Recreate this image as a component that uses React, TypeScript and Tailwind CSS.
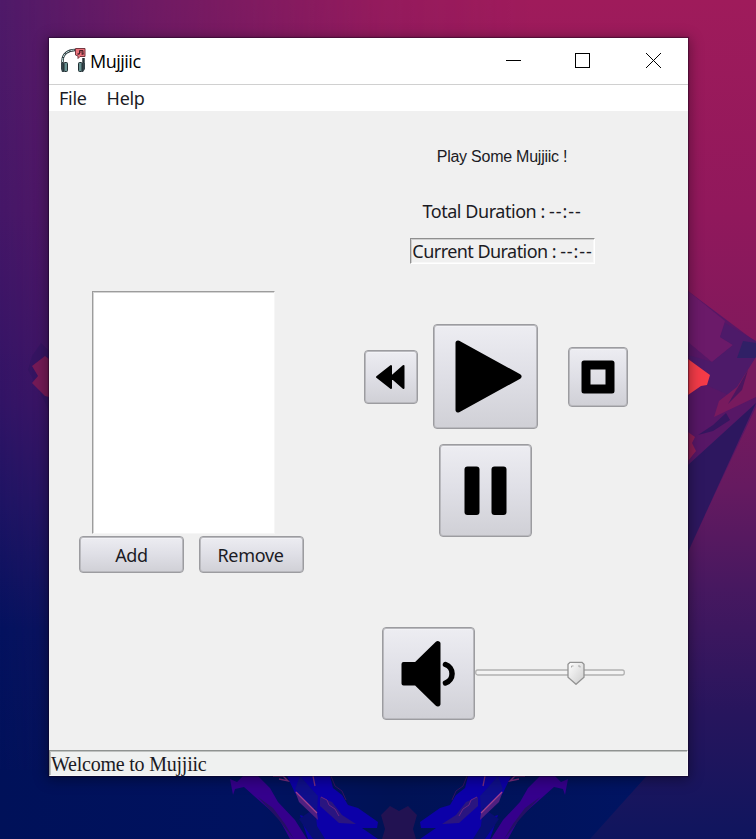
import type { ReactNode } from "react";

function Crystals() {
  return (
    <>
      <path d="M230 779l7 3 6-6h15l12 12 8 14 17 18 12 19h-17l-12-22-16-14-18-16-9 2-2 6z" fill="#35008c" />
      <path d="M258 797l15 11 12 16 9 15-16-20z" fill="#241064" />
      <path d="M287 776h43l3 12 9 7 6 10 10 3 20 14-1 6h-15l16 11h-70l-8-24 16 5-21-27z" fill="#0c00a8" />
      <path d="M300 776l18 20-1 17-22-24z" fill="#0f0f8b" />
      <path d="M315 808l2 18 8 13h-12l-14-20z" fill="#080f72" />
      <path d="M320 797l12 5 10 13 14 9-17-1-19-17z" fill="#2a1580" />
      <path d="M321 797l6 3 2 5 6 4 4 7" stroke="#6b2780" fill="none" />
      <path d="M295 791l22 22 1 7-19-18z" fill="#4f2080" />
      <path d="M296 792l21 21" stroke="#a0408c" strokeWidth="1.2" />
      <path d="M273 776h10l5 5-9-2M313 776l2 10" stroke="#7a2c80" fill="none" strokeWidth="1.3" />
      <path d="M331 776l4 10 7 5 4 9" stroke="#35125f" fill="none" />
    </>
  );
}

function Wallpaper() {
  return (
    <svg className="absolute inset-0 h-full w-full" viewBox="0 0 756 839" preserveAspectRatio="none" aria-hidden="true">
      <defs>
        <linearGradient id="cool" x1="0" y1="0" x2="0" y2="1">
          <stop offset="0" stopColor="#4f1a69" />
          <stop offset=".25" stopColor="#451768" />
          <stop offset=".48" stopColor="#321466" />
          <stop offset=".6" stopColor="#1e1464" />
          <stop offset=".75" stopColor="#04125f" />
          <stop offset="1" stopColor="#001159" />
        </linearGradient>
        <linearGradient id="warm" x1="0" y1="0" x2="0" y2="1">
          <stop offset="0" stopColor="#9f1b5b" />
          <stop offset=".25" stopColor="#91185c" />
          <stop offset=".42" stopColor="#80195c" />
          <stop offset=".58" stopColor="#661a60" />
          <stop offset=".7" stopColor="#471860" />
          <stop offset=".85" stopColor="#27155d" />
          <stop offset="1" stopColor="#0f155e" />
        </linearGradient>
        <linearGradient id="fade" x1="0" y1="0" x2="1" y2="0">
          <stop offset="0" stopColor="#000" />
          <stop offset=".2" stopColor="#666" />
          <stop offset=".5" stopColor="#ddd" />
          <stop offset=".7" stopColor="#fff" />
        </linearGradient>
        <linearGradient id="floor" x1="0" y1="0" x2="1" y2="0">
          <stop offset="0" stopColor="#001159" />
          <stop offset=".4" stopColor="#001260" />
          <stop offset=".6" stopColor="#001255" />
          <stop offset="1" stopColor="#001463" />
        </linearGradient>
        <mask id="side">
          <rect width="756" height="839" fill="url(#fade)" />
        </mask>
      </defs>
      <rect width="756" height="839" fill="url(#cool)" />
      <rect width="756" height="839" fill="url(#warm)" mask="url(#side)" />
      <path d="M0 770H652L590 839H0Z" fill="url(#floor)" />
      {/* left shard */}
      <path d="M41 343l8 8v60l-12-25-9-16 4-14z" fill="#30145f" opacity=".6" />
      <path d="M45 356l4 3v38l-4-1-13-13 6-7-6-10z" fill="#741a56" />
      {/* right shards */}
      <path d="M688 291l68 51v65L688 551Z" fill="#571766" />
      <path d="M688 291l37 30-5 16 13 8-21 17-24-20z" fill="#6b1a69" />
      <path d="M725 323l31 18v16l-23 40-27-12-18-30 24 7 21-17-13-8z" fill="#4d1a69" />
      <path d="M743 341l13 2v15l-19 0z" fill="#302066" />
      <path d="M756 357v40l-42 20 5-16 18-14z" fill="#781a5e" />
      <path d="M748 370l-6 20-14 14z" fill="#4c165f" />
      <path d="M688 359l22 16-3 10-6 1-13 9z" fill="#f43b48" />
      <path d="M688 432l7 5-3 6 4 8-8 10z" fill="#8b1e55" />
      <path d="M756 403L688 465v87z" fill="#2d175f" />
      <path d="M695 437l18-12 13-12 4 7-17 11-15 4z" fill="#35165f" />
      {/* mirrored crystals below the window */}
      <Crystals />
      <g transform="translate(798 0) scale(-1 1)">
        <Crystals />
      </g>
      <path d="M381 815l9-9 9 5 9-5 9 9-4 14 3 10h-34l3-10z" fill="#221252" />
    </svg>
  );
}

function HeadphonesLogo() {
  return (
    <svg className="h-[26px] w-[26px] shrink-0" viewBox="0 0 26 26" aria-hidden="true">
      <path d="M2.500 15V13C2.500 6 8 2 15 2M23.500 10v6" fill="none" stroke="#263337" strokeWidth="2.500" />
      <path d="M2.500 14V13C2.500 6 8 2 15 2" fill="none" stroke="#c9e6e4" strokeWidth="1" strokeDasharray="4 1" />
      <path d="M1 15h3v9H2l-1-3zM22 15h3v6l-2 3h-1z" fill="#344349" />
      <rect x="4" y="14.500" width="3.500" height="9" rx="1" fill="#699292" stroke="#1f2d31" />
      <rect x="18.500" y="14.500" width="3.500" height="9" rx="1" fill="#699292" stroke="#1f2d31" />
      <path d="M15.500.5H25v8h-5l-2 2V8l-2.500-1z" fill="#ed727b" stroke="#743740" />
      <path d="M19.500 6V2.500h3.500V6M19.500 4H23" fill="none" stroke="#49222b" />
      <path d="M17.500 6h2M21.500 6h2" stroke="#49222b" strokeWidth="1.500" />
    </svg>
  );
}

function TitleBar() {
  return (
    <header className="flex h-[47px] items-center border-b border-[#d0d0d0] bg-white pl-[11px]">
      <HeadphonesLogo />
      <h1 className="ml-1 flex-1 font-['Open_Sans',sans-serif] text-[18px] leading-6 tracking-[-0.5px] text-black">Mujjiic</h1>
      <div className="flex items-center gap-[54px] pr-[26px]">
        <button aria-label="Minimize" className="block">
          <svg className="h-4 w-4" viewBox="0 0 16 16"><path d="M0 7.500h15" stroke="#000" /></svg>
        </button>
        <button aria-label="Maximize" className="-ml-px block">
          <svg className="h-4 w-4" viewBox="0 0 16 16"><rect x=".5" y=".5" width="14" height="14" fill="none" stroke="#000" /></svg>
        </button>
        <button aria-label="Close" className="ml-px block">
          <svg className="h-4 w-4" viewBox="0 0 16 16"><path d="M0 0l15 15M15 0L0 15" stroke="#000" /></svg>
        </button>
      </div>
    </header>
  );
}

function ThemedButton({ label, size, children }: { label?: string; size: string; children: ReactNode }) {
  return (
    <button
      aria-label={label}
      className={
        "flex shrink-0 items-center justify-center rounded-[4px] border border-[#9c9ca0] bg-linear-to-b from-[#ededf2] via-[#dfdfe6] to-[#d0d0d6] shadow-[inset_0_0_0_1px_#b9b9be,inset_0_2px_0_#f2f2f6] " + size
      }
    >
      {children}
    </button>
  );
}

function Playlist() {
  return (
    <section className="flex w-[225px] flex-col pt-[180px]">
      <div className="ml-[13px] h-[243px] w-[183px] border border-t-[#9c9c9c] border-r-[#f6f6f6] border-b-[#f6f6f6] border-l-[#9c9c9c] bg-white shadow-[inset_1px_1px_0_#d4d4d4]" />
      <div className="mt-[2px] flex gap-[15px] text-[18px] tracking-[-0.3px]">
        <ThemedButton size="h-[37px] w-[105px] pt-px">Add</ThemedButton>
        <ThemedButton size="h-[37px] w-[105px] pt-px pr-[2px]">Remove</ThemedButton>
      </div>
    </section>
  );
}

function Duration({ name }: { name: string }) {
  return (
    <>
      {name} Duration :&nbsp;<span className="tracking-[0.9px]">--:--</span>
    </>
  );
}

function Player() {
  return (
    <section className="flex w-[276px] flex-col">
      <div className="flex flex-col items-center">
        <p className="mt-[36px] h-5 font-['Liberation_Sans',Arial,sans-serif] text-[16px] leading-5 tracking-[-0.24px]">Play Some Mujjiic !</p>
        <p className="mt-[32px] h-6 text-[18px] leading-6 tracking-[-0.45px]">
          <Duration name="Total" />
        </p>
        <p className="mt-[15px] flex h-[26px] w-[185px] items-center justify-center border border-t-[#8f8f8f] border-r-white border-b-white border-l-[#8f8f8f] pt-px pl-px text-[18px] whitespace-nowrap tracking-[-0.55px] shadow-[inset_1px_1px_0_#cfcfcf,inset_-1px_-1px_0_#f8f8f8]">
          <Duration name="Current" />
        </p>
      </div>
      <div className="mt-[60px] flex items-center">
        <ThemedButton label="Rewind" size="h-[54px] w-[54px]">
          <svg className="h-[54px] w-[54px] shrink-0" viewBox="0 0 54 54">
            <path d="M13 27L27 16V38ZM27 27L39.500 16V38Z" stroke="#000" strokeWidth="2" strokeLinejoin="round" />
          </svg>
        </ThemedButton>
        <div className="ml-[15px]">
          <ThemedButton label="Play" size="h-[105px] w-[105px]">
            <svg className="h-[105px] w-[105px] shrink-0" viewBox="0 0 105 105">
              <path d="M25 19L86 52.500L25 86Z" stroke="#000" strokeWidth="5" strokeLinejoin="round" />
            </svg>
          </ThemedButton>
        </div>
        <div className="ml-[30px]">
          <ThemedButton label="Stop" size="h-[60px] w-[60px]">
            <svg className="h-[60px] w-[60px] shrink-0" viewBox="0 0 60 60">
              <path fillRule="evenodd" d="M16 13.500h28q2.500 0 2.500 2.500v28q0 2.500-2.500 2.500H16q-2.500 0-2.500-2.500V16q0-2.500 2.500-2.500zM22.500 22.500v15h15v-15z" />
            </svg>
          </ThemedButton>
        </div>
      </div>
      <div className="mt-[15px] ml-[75px]">
        <ThemedButton label="Pause" size="h-[93px] w-[93px]">
          <svg className="h-[93px] w-[93px] shrink-0" viewBox="0 0 93 93">
            <rect x="25.500" y="22.500" width="15" height="48.500" rx="3" />
            <rect x="52.500" y="22.500" width="15" height="48.500" rx="3" />
          </svg>
        </ThemedButton>
      </div>
      <div className="mt-[90px] ml-[18px] flex items-center">
        <ThemedButton label="Mute" size="h-[93px] w-[93px]">
          <svg className="h-[93px] w-[93px] shrink-0" viewBox="0 0 93 93">
            <path d="M21.500 37h12.500L55 16.500q1-1 1.500 0V77q-.5 1-1.500 0L34 56.500H21.500z" stroke="#000" strokeWidth="4" strokeLinejoin="round" />
            <path d="M63.500 37.500a9.800 9.800 0 0 1 0 18.500" fill="none" stroke="#000" strokeWidth="5.500" strokeLinecap="round" />
          </svg>
        </ThemedButton>
        <svg className="mb-[2px] h-6 w-[150px] shrink-0" viewBox="0 0 150 24" role="slider" aria-label="Volume" aria-valuenow={70}>
          <defs>
            <linearGradient id="thumb" x1="0" y1="0" x2="1" y2="1">
              <stop stopColor="#fff" />
              <stop offset="1" stopColor="#ccc" />
            </linearGradient>
          </defs>
          <rect x=".75" y="9" width="148.500" height="5" rx="2" fill="#f3f3f3" stroke="#b1b1b1" strokeWidth="1.300" />
          <path d="M95 1.300h12l2 2v13l-8 7-8-7v-13z" fill="url(#thumb)" stroke="#929292" strokeWidth="1.300" />
          <path d="M96.500 6.500V5h2M103 5h2v1.500" fill="none" stroke="#aaa" />
        </svg>
      </div>
    </section>
  );
}

export default function App() {
  return (
    <div className="relative h-[839px] w-[756px] overflow-hidden bg-[#001159] pt-[38px] pl-[49px]">
      <Wallpaper />
      <main className="relative flex h-[738px] w-[639px] flex-col bg-[#f0f0f0] font-['Noto_Sans',sans-serif] text-[#1b1b24] shadow-[0_2px_12px_2px_rgba(0,0,0,0.35),0_0_1px_1px_rgba(20,0,30,0.4)]">
        <TitleBar />
        <nav className="flex h-[26px] items-center gap-[20px] bg-white pl-[10px] text-[18px] tracking-[-0.3px]">
          <button>File</button>
          <button>Help</button>
        </nav>
        <div className="flex h-[639px] gap-[60px] pl-[30px]">
          <Playlist />
          <Player />
        </div>
        <footer className="flex h-[26px] items-center border border-t-[#8f9391] border-r-[#f8f8f8] border-b-[#f8f8f8] border-l-[#8f9391] bg-[#eff1f0] pt-px pl-px font-['Liberation_Serif',serif] text-[20px] leading-5 tracking-[-0.22px] shadow-[inset_1px_1px_0_#bfc2c0]">
          Welcome to Mujjiic
        </footer>
      </main>
    </div>
  );
}
